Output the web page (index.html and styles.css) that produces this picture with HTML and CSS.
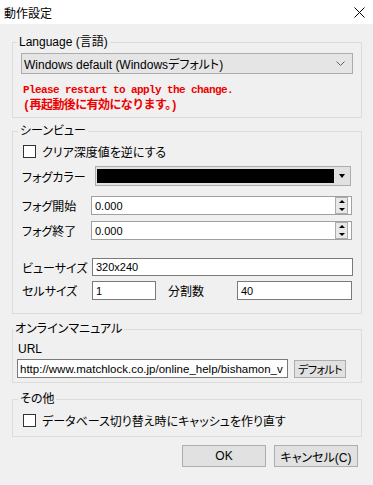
FILE: index.html
```html
<!DOCTYPE html>
<html lang="ja">
<head>
  <meta charset="UTF-8">
  <title>動作設定</title>
  <link rel="stylesheet" href="styles.css">
</head>
<body>
  <div class="titlebar">
    <span class="title">動作設定</span>
    <svg class="close" width="11" height="11" viewBox="0 0 11 11">
      <path d="M0.5 0.5 L10.5 10.5 M10.5 0.5 L0.5 10.5" stroke="#000" stroke-width="1" fill="none"/>
    </svg>
  </div>

  <div class="dialog">
    <fieldset class="group lang">
      <legend>Language (言語)</legend>
      <div class="combo">
        <span>Windows default (Windowsデフォルト)</span>
        <svg width="9" height="5" viewBox="0 0 9 5"><path d="M0.5 0.5 L4.5 4.5 L8.5 0.5" stroke="#606060" fill="none"/></svg>
      </div>
      <p class="notice">Please restart to apply the change.<br><span class="ja">(再起動後に有効になります。)</span></p>
    </fieldset>

    <fieldset class="group scene">
      <legend>シーンビュー</legend>
      <label class="check"><span class="box"></span>クリア深度値を逆にする</label>
      <div class="row r-color">
        <span class="lbl">フォグカラー</span>
        <div class="colorpick"><span class="swatch"></span><span class="tri"></span></div>
      </div>
      <div class="row r-start">
        <span class="lbl">フォグ開始</span>
        <div class="field spin"><span class="val">0.000</span><span class="spinbtn"><i class="up"></i><i class="down"></i></span></div>
      </div>
      <div class="row r-end">
        <span class="lbl">フォグ終了</span>
        <div class="field spin"><span class="val">0.000</span><span class="spinbtn"><i class="up"></i><i class="down"></i></span></div>
      </div>
      <div class="row r-view">
        <span class="lbl">ビューサイズ</span>
        <div class="field"><span class="val">320x240</span></div>
      </div>
      <div class="row r-cell">
        <span class="lbl">セルサイズ</span>
        <div class="field cellsize"><span class="val">1</span></div>
        <span class="lbl div">分割数</span>
        <div class="field"><span class="val">40</span></div>
      </div>
    </fieldset>

    <fieldset class="group manual">
      <legend>オンラインマニュアル</legend>
      <div class="url-lbl">URL</div>
      <div class="url-row">
        <div class="field url"><span class="val">http://www.matchlock.co.jp/online_help/bishamon_v</span></div>
        <button class="btn small">デフォルト</button>
      </div>
    </fieldset>

    <fieldset class="group other">
      <legend>その他</legend>
      <label class="check"><span class="box"></span>データベース切り替え時にキャッシュを作り直す</label>
    </fieldset>

    <div class="actions">
      <button class="btn">OK</button>
      <button class="btn">キャンセル(C)</button>
    </div>
  </div>
</body>
</html>
```

FILE: styles.css
```css
html, body {
  height: 100%;
  overflow: hidden;
}
body {
  margin: 0;
  width: 373px;
  height: 485px;
  background: #f0f0f0;
  color: #000;
  font-family: "Liberation Sans", "Noto Sans CJK JP", sans-serif;
  font-size: 12px;
  font-feature-settings: "palt";
}
.titlebar {
  height: 24px;
  background: #fff;
  display: flex;
  align-items: center;
  justify-content: space-between;
  padding: 0 8px 0 4px;
}
.title {
  font-family: "Noto Sans CJK JP", sans-serif;
  font-size: 12px;
}
.dialog {
  display: flex;
  flex-direction: column;
  padding: 10px 11px 0 12px;
}
.group {
  margin: 0;
  min-width: 0;
  border: 1px solid #dcdcdc;
}
.group legend {
  margin-left: -4px;
  padding: 0 2px;
  line-height: 16px;
}
.lang {
  padding: 3px 8px 3px 8px;
}
.combo {
  height: 21px;
  box-sizing: border-box;
  border: 1px solid #adadad;
  background: #e5e5e5;
  display: flex;
  align-items: center;
  justify-content: space-between;
  padding: 0 7px 0 2px;
}
.notice {
  margin: 8px 0 0 2px;
  line-height: 16px;
  color: #ee0000;
  font-weight: bold;
  font-family: "Liberation Mono", "Noto Sans CJK JP", monospace;
  font-size: 11px;
  letter-spacing: -0.6px;
}
.notice .ja {
  font-size: 12px;
  font-feature-settings: normal;
}
.scene {
  margin-top: 5px;
  padding: 4px 9px 13px 9px;
}
.check {
  display: flex;
  align-items: center;
  height: 16px;
  padding-left: 1px;
}
.check .box {
  width: 11px;
  height: 11px;
  border: 1px solid #333;
  background: #fff;
  margin-right: 6px;
}
.row {
  display: flex;
  align-items: center;
}
.lbl {
  width: 69px;
  flex: none;
}
.r-color { margin-top: 7px; height: 20px; }
.r-start { margin-top: 10px; height: 19px; }
.r-end { margin-top: 6px; height: 19px; }
.r-view { margin-top: 18px; height: 18px; }
.r-cell { margin-top: 5px; height: 19px; }
.colorpick {
  flex: 1;
  height: 20px;
  box-sizing: border-box;
  margin: 0 1px 0 4px;
  border: 1px solid #adadad;
  background: #e1e1e1;
  display: flex;
  align-items: center;
  padding: 0 5px 0 1px;
}
.swatch {
  flex: 1;
  height: 14px;
  background: #000;
  margin-right: 5px;
}
.tri {
  width: 0;
  height: 0;
  border-left: 3.5px solid transparent;
  border-right: 3.5px solid transparent;
  border-top: 4px solid #000;
}
.field {
  flex: 1;
  height: 100%;
  box-sizing: border-box;
  border: 1px solid #7a7a7a;
  background: #fff;
  display: flex;
  align-items: center;
  padding-left: 3px;
  font-size: 11px;
  white-space: nowrap;
  overflow: hidden;
}
.field .val {
  flex: 1;
}
.r-view .field {
  margin: 0 -1px 0 1px;
}
.r-cell .cellsize {
  flex: none;
  width: 64px;
  margin-left: 1px;
}
.lbl.div {
  margin-left: 12px;
  width: 69px;
}
.spin {
  border-color: #a0a0a0;
  padding-right: 3px;
}
.spinbtn {
  width: 11px;
  height: 15px;
  border: 1px solid #adadad;
  background: #e8e8e8;
  display: flex;
  flex-direction: column;
  align-items: center;
  justify-content: space-around;
}
.spinbtn .up,
.spinbtn .down {
  width: 0;
  height: 0;
  border-left: 3px solid transparent;
  border-right: 3px solid transparent;
}
.spinbtn .up {
  border-bottom: 3px solid #000;
}
.spinbtn .down {
  border-top: 3px solid #000;
}
.manual {
  margin-top: 7px;
  padding: 4px 9px 4px 4px;
}
.url-lbl {
  line-height: 16px;
  padding-left: 1px;
}
.url-row {
  display: flex;
  align-items: center;
  margin-top: 2px;
  height: 19px;
}
.field.url {
  flex: none;
  width: 271px;
  font-size: 11.5px;
  padding-left: 2px;
}
.btn {
  font-family: "Liberation Sans", "Noto Sans CJK JP", sans-serif;
  font-size: 12px;
  font-feature-settings: "palt";
  background: #e1e1e1;
  border: 1px solid #adadad;
  color: #000;
  padding: 0;
  height: 22px;
  width: 84px;
  white-space: nowrap;
}
.btn.small {
  width: 52px;
  height: 18px;
  margin-left: 6px;
  font-size: 11px;
  letter-spacing: -0.6px;
}
.other {
  margin-top: 8px;
  padding: 5px 9px 8px 9px;
}
.actions {
  display: flex;
  justify-content: flex-end;
  gap: 8px;
  margin-top: 8px;
  padding-right: 4px;
}
```
